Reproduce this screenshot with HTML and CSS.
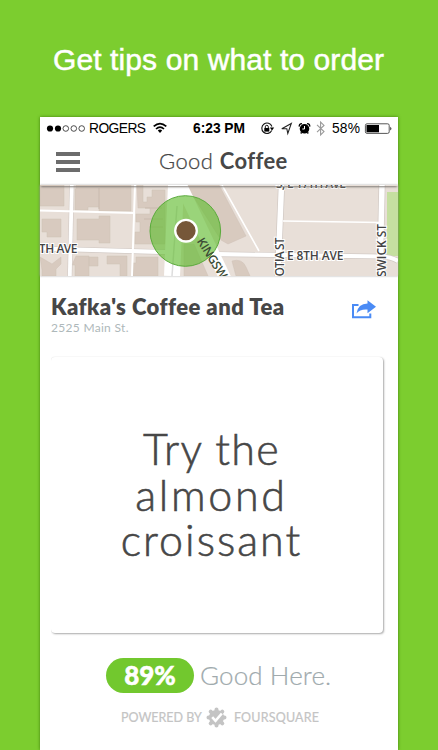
FILE: index.html
```
<!DOCTYPE html>
<html lang="en">
<head>
    <meta charset="UTF-8">
    <meta name="viewport" content="width=device-width, initial-scale=1.0">
    <title>Good Coffee</title>
    <link rel="stylesheet" href="styles.css">
</head>
<body>
<h1 class="headline"><svg width="332" height="40"><text x="0" y="28" textLength="331">Get tips on what to order</text></svg></h1>
<main class="phone">
    <div class="status">
        <svg width="358" height="24" viewBox="40 117 358 24">
            <circle cx="50" cy="128.500" r="3.100"/>
            <circle cx="58" cy="128.500" r="3.100"/>
            <g fill="none" stroke="#222" stroke-width=".8">
                <circle cx="65.800" cy="128.500" r="2.800"/>
                <circle cx="73.800" cy="128.500" r="2.800"/>
                <circle cx="81.700" cy="128.500" r="2.800"/>
            </g>
            <text x="89" y="133" textLength="57">ROGERS</text>
            <g fill="none" stroke="#000" stroke-width="1.700">
                <path d="M153.700 126.400Q160 120.700 166.300 126.400"/>
                <path d="M156 129Q160 125.300 164 129"/>
            </g>
            <path d="M157.800 130.500Q160 128.700 162.200 130.500L160 133z"/>
            <text class="bold" x="193" y="133" textLength="52">6:23 PM</text>
            <!-- rotation lock -->
            <path d="M271.700 130.500A5.200 5.200 0 1 1 271.900 126.500" fill="none" stroke="#111" stroke-width="1.100"/>
            <path d="M269.800 127.500h4.400l-2.200 3z"/>
            <rect x="264.300" y="128" width="5" height="3.600"/>
            <path d="M265.300 128v-1.200a1.500 1.500 0 0 1 3 0v1.200" fill="none" stroke="#111"/>
            <!-- location -->
            <path d="M281.800 128.700L291.300 123.500L287.800 133.400L286.800 128.700z" fill="none" stroke="#222" stroke-width="1.100"/>
            <!-- alarm -->
            <circle cx="304.500" cy="128.800" r="4.800"/>
            <path d="M299.300 126.600q-.5-2.700 2.700-3M307 123.600q3.200.3 2.700 3M301.500 132.500l-.8 1M307.500 132.500l.8 1" fill="none" stroke="#000" stroke-width="1.300"/>
            <path d="M304.500 129V126M304.500 129H302.300" fill="none" stroke="#fff"/>
            <path d="M317 124.900L324 131.600L320.600 135V122L324 125.400L317 132.100" fill="none" stroke="#999" stroke-width="1.100"/>
            <text x="332" y="133" textLength="28">58%</text>
            <rect x="365.400" y="123.800" width="23.800" height="9.600" rx="1.600" fill="none" stroke="#444" stroke-width=".9"/>
            <rect x="366.500" y="125" width="12.500" height="7.300"/>
            <path d="M390.400 126.700q2 1.900 0 3.800z"/>
        </svg>
    </div>
    <header class="navbar">
        <div class="menu"><span></span><span></span><span></span></div>
        <div class="brand">Good <b>Coffee</b></div>
    </header>
    <div class="map">
        <svg width="358" height="91" viewBox="40 185 358 91">
            <rect x="40" y="185" width="358" height="91" fill="#e8dfd8"/>
            <path d="M387 192h11v64h-11z" fill="#c5dfa0"/>
            <!-- buildings -->
            <g fill="#d8cabf" stroke="#cfc1b6" stroke-width=".5">
                <path d="M40 185h24v21H40zM76 185h55v26H99v-4h-11v3H75v-21h1zM42 219h19v18H47v-5h-5zM77 219h22v-3h11v27H99v-3H77z"/>
                <path d="M137 185h6v17h4v-5h5v-7h13v54h-30v-12h5v-10h-4v-8h14v-6h-12z"/>
                <path d="M40 257l12 7l9-7v7l-5 5v7h-14v-6zM76 256h13v20H75v-11h-3zM89 257h9v9h-9zM107 256h20v20h-7v-12h-13zM136 257h22v19h-25v-13h3z"/>
                <path d="M187 185h32l27 51l-18 8l-7-4l-33-52zM232 261q10-3 14 6l4 9h-14zM184 244h10l14 32h-24z"/>
            </g>
            <path d="M99 188v21M145 208h17M144 219h19M149 227h14" stroke="#c9baae" fill="none"/>
            <!-- road casings, then the road surface -->
            <g fill="none" stroke="#d2cac5">
                <path d="M71.800 185L69.800 276" stroke-width="5"/>
                <path d="M40 248.500L168 252.200M218 254.200L382 256.500Q391 257 398 261" stroke-width="5.500"/>
                <path d="M281.500 185L277.800 276M382 185L380 276" stroke-width="7"/>
            </g>
            <g fill="none" stroke="#fff">
                <path d="M71.800 185L69.800 276" stroke-width="3.800"/>
                <path d="M40 210.500L134 213M135 185L132 276" stroke-width="2"/>
                <path d="M222 185L259 251M283 221L380 222.500" stroke-width="1.600"/>
                <path d="M40 248.500L168 252.200M218 254.200L382 256.500Q391 257 398 261" stroke-width="4.200"/>
                <path d="M281.500 185L277.800 276M382 185L380 276" stroke-width="5.500"/>
                <path d="M176 185L172 276" stroke-width="16"/>
                <path d="M181 185L226 280" stroke-width="12"/>
            </g>
            <path d="M177 206L172 276" stroke="#ddd" stroke-width="1.500"/>
            <g class="street">
                <text x="39" y="253" textLength="38.500">TH AVE</text>
                <text x="287" y="260.300" textLength="56.500">E 8TH AVE</text>
                <text x="276" y="188" textLength="70">S, E 17TH AVE</text>
                <text transform="translate(284 276.500) rotate(-90)" textLength="39">OTIA ST</text>
                <text transform="translate(385.500 277) rotate(-90)" textLength="53">SWICK ST</text>
            </g>
            <circle cx="185.300" cy="231" r="35.300" fill="#64bd32" fill-opacity=".65" stroke="#59aa3a" stroke-width="1"/>
            <text class="kingsway" transform="translate(196.500 241) rotate(58)" textLength="60">KINGSWAY</text>
            <circle cx="186" cy="230.700" r="10.800" fill="#765739" stroke="#fff" stroke-width="2.300"/>
        </svg>
    </div>
    <section class="venue">
        <div>
            <h2>Kafka's Coffee and Tea</h2>
            <p>2525 Main St.</p>
        </div>
        <svg class="share" width="25" height="20" viewBox="351 299 25 20" fill="#4a8bf5">
            <path d="M358.500 304.900H353V317.300H370.300V313.600" fill="none" stroke="#4a8bf5" stroke-width="2"/>
            <path d="M367.500 300.300L376 306.800L367.500 313.200V309.600Q360 309 356.500 313.400Q358 303.800 367.500 303.600z"/>
        </svg>
    </section>
    <section class="tip">
        <p><span class="try">Try the</span><span class="almond">almond</span><span class="croissant">croissant</span></p>
    </section>
    <div class="rating">
        <b class="score">89%</b>
        <span class="verdict">Good Here.</span>
    </div>
    <div class="powered">
        <span>POWERED BY</span>
        <svg width="21" height="21" viewBox="-10.500 -10.500 21 21">
            <circle r="7.600" fill="#c4c4c4"/>
            <g stroke="#c4c4c4" stroke-width="4" stroke-linecap="round">
                <path d="M0-8V8M-8 0H8M-5.800-5.800L5.800 5.800M5.800-5.800L-5.800 5.800"/>
            </g>
            <path d="M-4.300-.3L-1 3.300L5.300-4" fill="none" stroke="#fff" stroke-width="2.600"/>
        </svg>
        <span class="four">FOURSQUARE</span>
    </div>
</main>
</body>
</html>
```
FILE: styles.css
```
* {
    box-sizing: border-box;
}
body {
    margin: 0;
    height: 750px;
    overflow: hidden;
    background: #7ccd2f;
    font-family: Lato, sans-serif;
    color: #474747;
}
svg {
    display: block;
}
h1, h2, p {
    margin: 0;
    font-weight: normal;
}
.headline {
    height: 117px;
    padding: 42px 0 0 53px;
}
.headline text {
    font: 30px "Liberation Sans", sans-serif;
    fill: #fff;
    stroke: #fff;
    stroke-width: .5px;
}
.phone {
    width: 358px;
    height: 633px;
    margin-left: 40px;
    background: #fff;
    box-shadow: 0 0 3px #3f7d0c;
}
.status {
    height: 24px;
}
.status text {
    font: 13.8px "Liberation Sans", sans-serif;
}
.status .bold {
    font-weight: bold;
}
.navbar {
    position: relative;
    display: flex;
    height: 45px;
    box-shadow: 0 2px 2px -1px #7d7975;
}
.menu {
    display: flex;
    flex-direction: column;
    gap: 4px;
    width: 24px;
    margin: 11px 0 0 16px;
}
.menu span {
    height: 4px;
    background: #6c6c6c;
}
.brand {
    margin: 6px 0 0 79px;
    font-size: 22px;
    font-weight: 300;
    line-height: 28px;
    letter-spacing: .4px;
    white-space: nowrap;
    -webkit-text-stroke: .25px #474747;
}
.brand b {
    font-weight: 700;
    -webkit-text-stroke: 0;
}
.map {
    height: 91px;
    margin-top: -1px;
    box-shadow: 0 0 2px #aaa;
}
.street text, .kingsway {
    font: 600 12px "Open Sans", sans-serif;
    fill: #444;
    stroke: #fff;
    stroke-width: 2px;
    paint-order: stroke;
}
.kingsway {
    fill: #3c4c35;
    stroke: none;
}
.venue {
    display: flex;
    justify-content: space-between;
    height: 81px;
    padding: 18px 22px 0 11px;
}
.venue h2 {
    font-size: 22px;
    font-weight: 800;
    line-height: 25px;
    letter-spacing: .45px;
    white-space: nowrap;
}
.venue p {
    font-size: 12px;
    line-height: 17px;
    letter-spacing: .3px;
    color: #aeb8ba;
}
.share {
    margin-top: 5px;
}
.tip {
    width: 332px;
    height: 276px;
    margin-left: 11px;
    padding-top: 69px;
    border-radius: 4px;
    box-shadow: 1px 1px 2px #aaa, 0 0 1px #ddd;
    clip-path: inset(-2px -4px -4px 0);
}
.tip p {
    width: 321px;
    font-size: 43px;
    font-weight: 300;
    line-height: 45.500px;
    text-align: center;
    -webkit-text-stroke: .6px #474747;
}
.tip span {
    display: block;
}
.try {
    letter-spacing: 1.3px;
}
.almond {
    letter-spacing: 2.7px;
}
.croissant {
    letter-spacing: 2px;
}
.rating {
    display: flex;
    height: 35px;
    margin: 25px 0 0 66px;
}
.score {
    width: 88px;
    border-radius: 18px;
    background: #72c82e;
    color: #fff;
    font-size: 26px;
    font-weight: 900;
    line-height: 34px;
    text-align: center;
    -webkit-text-stroke: .5px #fff;
}
.verdict {
    margin-left: 6px;
    color: #a0aaad;
    font-size: 26px;
    font-weight: 300;
    line-height: 34px;
    letter-spacing: .1px;
    white-space: nowrap;
    -webkit-text-stroke: .2px #a0aaad;
}
.powered {
    display: flex;
    align-items: center;
    margin: 14px 0 0 81px;
    color: #c4c4c4;
    font-size: 12.5px;
    line-height: 21px;
    white-space: nowrap;
    -webkit-text-stroke: .2px #c4c4c4;
}
.powered svg {
    margin: 0 7px 0 4px;
}
.four {
    letter-spacing: .2px;
}
```
